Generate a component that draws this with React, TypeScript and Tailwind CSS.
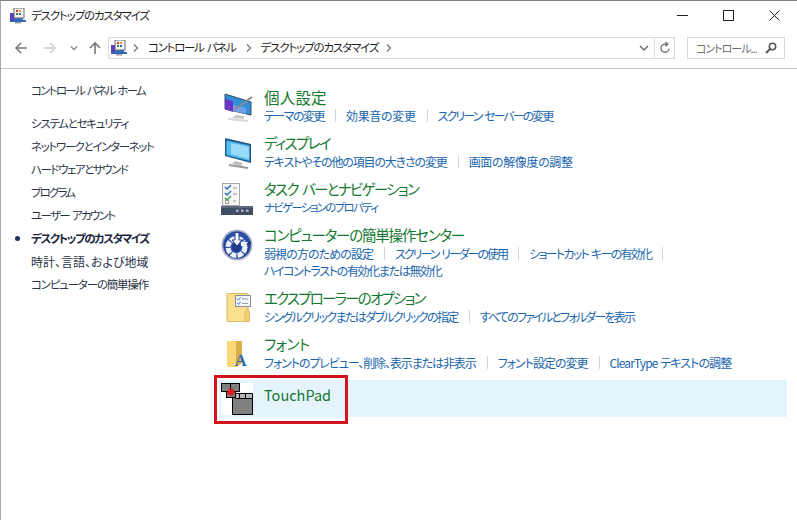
import React from "react";

const jp = "[font-family:'Noto_Sans_CJK_JP','Noto_Sans_JP',sans-serif]";

function PersonalizeMini({ size = 16 }: { size?: number }) {
  return (
    <svg width={size} height={size} viewBox="0 0 16 16">
      <rect x="0" y="5" width="13" height="8" fill="#2f6fd6" />
      <rect x="0" y="5" width="4" height="8" fill="#5a3fc0" />
      <rect x="0" y="12" width="16" height="2" fill="#3565b5" />
      <rect x="4" y="0" width="10" height="10" fill="#f4f4f4" stroke="#6a6a6a" strokeWidth="1" />
      <rect x="6" y="2" width="2" height="2" fill="#d33" />
      <rect x="9" y="2" width="2" height="2" fill="#e0a020" />
      <rect x="6" y="5" width="2" height="2" fill="#3a8a3a" />
      <rect x="9" y="5" width="2" height="2" fill="#3a6ad0" />
      <rect x="5" y="14" width="6" height="1.5" fill="#a0a0a0" />
    </svg>
  );
}

function IconPersonal() {
  return (
    <svg width="32" height="32" viewBox="0 0 32 32">
      <path d="M1 3 L27 11 V24 L1 18 Z" fill="#2f8fd8" stroke="#3a4a5a" strokeWidth="1" />
      <path d="M1 8 L9 10 V21 L1 18 Z" fill="#6a35c8" />
      <path d="M9 14 L22 17 V23 L9 20 Z" fill="#6fa0e8" />
      <path d="M10 19 L28 6" stroke="#8a8a8a" strokeWidth="2" />
      <path d="M12 24 L20 25 V28 L8 27 Z" fill="#c8c8c8" />
      <path d="M4 28 L24 30" stroke="#d8d8d8" strokeWidth="2" />
    </svg>
  );
}

function IconDisplay() {
  return (
    <svg width="32" height="32" viewBox="0 0 32 32">
      <path d="M1 1 L27 7 V26 L1 19 Z" fill="#1d5d8e" />
      <path d="M2.5 3.5 L25.5 8.5 V24 L2.5 18 Z" fill="#55bdf0" />
      <path d="M7 6 L25 10 V22 L7 17 Z" fill="#9adcf8" />
      <path d="M11 24 L18 26 V29 L8 27 Z" fill="#bcbcbc" />
      <path d="M5 28 L24 31" stroke="#9a9a9a" strokeWidth="2" />
    </svg>
  );
}

function IconTaskbar() {
  return (
    <svg width="32" height="32" viewBox="0 0 32 32">
      <rect x="1.5" y="0.5" width="17" height="22" fill="#f6f6f6" stroke="#a8a8a8" />
      <path d="M4 4 L6 6 L10 2" stroke="#2a6fc0" strokeWidth="1.5" fill="none" />
      <path d="M4 10 L6 12 L10 8" stroke="#2a6fc0" strokeWidth="1.5" fill="none" />
      <path d="M4 15 L6 17 L10 13" stroke="#4a9a4a" strokeWidth="1.5" fill="none" />
      <rect x="4.5" y="17.5" width="3" height="3" fill="#fff" stroke="#999" />
      <path d="M12 5 H16 M12 11 H16 M12 18 H15" stroke="#999" />
      <rect x="0" y="23" width="32" height="9" fill="#3f4e62" />
      <rect x="0" y="23" width="32" height="2" fill="#5c6a80" />
      <rect x="15" y="26.5" width="2.5" height="2.5" fill="#a8b0bc" />
      <rect x="20" y="26.5" width="2.5" height="2.5" fill="#a8b0bc" />
      <rect x="25" y="26.5" width="2.5" height="2.5" fill="#a8b0bc" />
    </svg>
  );
}

function IconAccess() {
  return (
    <svg width="32" height="32" viewBox="0 0 32 32">
      <defs>
        <radialGradient id="acc" cx="50%" cy="40%" r="60%">
          <stop offset="0%" stopColor="#3f6fd0" />
          <stop offset="100%" stopColor="#1f3a8a" />
        </radialGradient>
      </defs>
      <circle cx="16" cy="16" r="15.5" fill="#aab4c8" />
      <circle cx="16" cy="16" r="13.8" fill="url(#acc)" />
      <circle cx="15.5" cy="18" r="8.5" fill="none" stroke="#eef2fa" strokeWidth="5" strokeDasharray="5.5 1.2" />
      <path d="M22 14 L30 14" stroke="#1f3a8a" strokeWidth="3" />
      <path d="M20 13 L27 13 L25 16 L27 19 L20 17 Z" fill="#eef2fa" />
      <circle cx="15.5" cy="18" r="4.6" fill="#1f3a8a" />
      <path d="M14 3.5 H18 V11 H21 L16 17 L11 11 H14 Z" fill="#fff" stroke="#1f3a8a" strokeWidth="1" />
    </svg>
  );
}

function IconFolderOptions() {
  return (
    <svg width="32" height="32" viewBox="0 0 32 32">
      <path d="M6 1.5 H27 V29.5 H6 Z" fill="#fbe08f" stroke="#dcbc68" />
      <path d="M24 29.5 V20 L26.5 16 L28.5 20 V29.5 Z" fill="#f5cf72" stroke="#dcbc68" />
      <rect x="14.5" y="3.5" width="15" height="11" fill="#f4f6f8" stroke="#8a8f98" />
      <path d="M16 6.5 L17.5 8 L19.5 5.5 M16 11 L17.5 12.5 L19.5 10" stroke="#3a76c4" fill="none" />
      <path d="M21 7 H27 M21 11.5 H27" stroke="#9a9a9a" />
    </svg>
  );
}

function IconFonts() {
  return (
    <svg width="32" height="32" viewBox="0 0 32 32">
      <path d="M6 3 H21 V25 L15 29 H6 Z" fill="#f8d878" />
      <path d="M15 3 H21 V25 L15 29 Z" fill="#dcae4a" />
      <text x="13.5" y="28" fontFamily="'Liberation Serif', serif" fontWeight="700" fontSize="17" fill="#2a6cb4">A</text>
    </svg>
  );
}

function IconTouchPad() {
  return (
    <svg width="32" height="32" viewBox="0 0 32 32">
      <rect x="0" y="0" width="32" height="32" fill="#ffffff" />
      <rect x="0.5" y="0.5" width="9" height="8" fill="#808080" stroke="#000" />
      <rect x="9.5" y="0.5" width="9" height="8" fill="#808080" stroke="#000" />
      <rect x="5.5" y="8.5" width="9" height="6" fill="#808080" stroke="#000" />
      <path d="M14.5 10.5 H31.5 V31.5 H11.5 V14.5 H14.5 Z" fill="#808080" stroke="#000" />
      <path d="M14.5 15.5 H31.5" stroke="#000" />
      <path d="M15 11 H31 V15 H15 Z" fill="#b8b8b8" />
      <path d="M18.5 10.5 V15 M24.5 10.5 V15" stroke="#000" />
      <circle cx="10" cy="9" r="3.5" fill="#e01b24" />
    </svg>
  );
}

function Sep() {
  return <span className="ml-[11px] mr-[10px] inline-block h-[13px] w-px bg-[#d0d5da]" />;
}

type Item = { t: string; c: string };

function Links({ items, sepEnd }: { items: Item[]; sepEnd?: boolean }) {
  return (
    <div className="flex h-[17px] items-center text-[12px] text-[#1a66ad]">
      {items.map((it, i) => (
        <React.Fragment key={it.t}>
          {i > 0 && <Sep />}
          <span className={`whitespace-nowrap ${it.c}`}>{it.t}</span>
        </React.Fragment>
      ))}
      {sepEnd && <Sep />}
    </div>
  );
}

function Section({
  icon,
  title,
  titleClass,
  lines,
  className = "",
  iconClass = "ml-[2px] w-[43px]",
}: {
  icon: React.ReactNode;
  title: string;
  titleClass: string;
  lines: { items: Item[]; sepEnd?: boolean }[];
  className?: string;
  iconClass?: string;
}) {
  return (
    <div className={`flex ${className}`}>
      <div className={`mt-[3px] shrink-0 ${iconClass}`}>{icon}</div>
      <div className="flex flex-col">
        <div className={`flex h-[19px] items-center whitespace-pre text-[#13782f] ${titleClass}`}>{title}</div>
        {lines.map((l, i) => (
          <Links key={i} items={l.items} sepEnd={l.sepEnd} />
        ))}
      </div>
    </div>
  );
}

const sideItems: Item[] = [
  { t: "システムとセキュリティ", c: "text-[11.5px] tracking-[-1.3px]" },
  { t: "ネットワークとインターネット", c: "text-[11.5px] tracking-[-1.36px]" },
  { t: "ハードウェアとサウンド", c: "text-[11.5px] tracking-[-1.45px]" },
  { t: "プログラム", c: "text-[11.5px] tracking-[-1.9px]" },
  { t: "ユーザー アカウント", c: "text-[11.5px] tracking-[-1.67px] [word-spacing:2px]" },
];

function Chevron({ className = "" }: { className?: string }) {
  return (
    <svg className={className} width="6" height="8" viewBox="0 0 6 8">
      <path d="M1 0.5L4.5 4L1 7.5" fill="none" stroke="#777" strokeWidth="1.3" />
    </svg>
  );
}

export default function App() {
  return (
    <div
      className={`relative h-[520px] w-[797px] overflow-hidden border-t border-l border-t-[#7c8480] border-l-[#a8a8a8] bg-white ${jp} text-[#1e1e1e] [font-feature-settings:'palt'] leading-none`}
    >
      {/* Title bar */}
      <div className="flex h-[29px] items-center pl-[9px]">
        <PersonalizeMini />
        <span className="ml-[5px] whitespace-nowrap text-[11.5px] tracking-[-1.15px]">デスクトップのカスタマイズ</span>
        <div className="ml-auto flex h-full items-center text-[#222]">
          <div className="flex w-[46px] justify-center">
            <svg width="11" height="11" viewBox="0 0 11 11"><path d="M0 5.5H11" stroke="#222" /></svg>
          </div>
          <div className="flex w-[46px] justify-center">
            <svg width="11" height="11" viewBox="0 0 11 11"><rect x="0.5" y="0.5" width="10" height="10" fill="none" stroke="#222" /></svg>
          </div>
          <div className="flex w-[46px] justify-center">
            <svg width="11" height="11" viewBox="0 0 11 11"><path d="M0.5 0.5L10.5 10.5M10.5 0.5L0.5 10.5" stroke="#222" /></svg>
          </div>
        </div>
      </div>

      {/* Address bar */}
      <div className="flex h-[39px] items-start border-b border-[#c8c8c8] pt-[7px]">
        <div className="flex h-[22px] w-[107px] items-center">
          <svg className="ml-[13px]" width="14" height="14" viewBox="0 0 14 14"><path d="M13 7H2M7 2L2 7L7 12" fill="none" stroke="#7a7a7a" strokeWidth="1.6" /></svg>
          <svg className="ml-[15px]" width="14" height="14" viewBox="0 0 14 14"><path d="M1 7H12M7 2L12 7L7 12" fill="none" stroke="#d0d0d0" strokeWidth="1.6" /></svg>
          <svg className="ml-[13px]" width="8" height="8" viewBox="0 0 8 8"><path d="M1 2.5L4 5.5L7 2.5" fill="none" stroke="#8a8a8a" strokeWidth="1.4" /></svg>
          <svg className="ml-[10px]" width="14" height="14" viewBox="0 0 14 14"><path d="M7 13V2M2 7L7 2L12 7" fill="none" stroke="#7a7a7a" strokeWidth="1.6" /></svg>
        </div>
        <div className="flex h-[22px] w-[567px] items-center border border-[#d9d9d9] text-[11.5px]">
          <div className="ml-[2px]"><PersonalizeMini /></div>
          <Chevron className="ml-[6px]" />
          <span className="ml-[9px] whitespace-nowrap tracking-[-1.3px] [word-spacing:2px]">コントロール パネル</span>
          <Chevron className="ml-[10px]" />
          <span className="ml-[9px] whitespace-nowrap tracking-[-1.15px]">デスクトップのカスタマイズ</span>
          <Chevron className="ml-[8px]" />
          <div className="ml-auto flex h-full items-center">
            <svg className="mr-[5px]" width="10" height="10" viewBox="0 0 10 10"><path d="M1 3L5 7L9 3" fill="none" stroke="#666" strokeWidth="1.4" /></svg>
            <div className="flex h-full w-[20px] items-center justify-center border-l border-[#d9d9d9]">
              <svg width="12" height="12" viewBox="0 0 12 12"><path d="M10 6.5A4 4 0 1 1 6 2.2H8M6.5 0L8.8 2.2L6.5 4.4" fill="none" stroke="#777" strokeWidth="1.4" /></svg>
            </div>
          </div>
        </div>
        <div className="ml-[12px] flex h-[22px] w-[98px] items-center border border-[#d9d9d9] pl-[8px] text-[11px] text-[#6d6d6d]">
          <span className="whitespace-nowrap tracking-[-1px]">コントロール...</span>
          <svg className="ml-auto mr-[7px]" width="12" height="12" viewBox="0 0 12 12"><circle cx="7.5" cy="4.5" r="3.2" fill="none" stroke="#555" strokeWidth="1.5" /><path d="M5 7L1 11" stroke="#555" strokeWidth="2" /></svg>
        </div>
      </div>

      {/* Body */}
      <div className="flex">
        <aside className="w-[218px] shrink-0 pl-[30px] text-[12px] text-[#2b3448]">
          <div className="mt-[11px] flex h-[22px] items-center whitespace-nowrap text-[11.5px] tracking-[-1.72px] [word-spacing:2px]">コントロール パネル ホーム</div>
          <div className="mt-[10px] flex flex-col">
            {sideItems.map((s) => (
              <div key={s.t} className={`flex h-[23px] items-center whitespace-nowrap ${s.c}`}>{s.t}</div>
            ))}
            <div className="relative flex h-[23px] items-center whitespace-nowrap text-[11.5px] font-bold tracking-[-1.46px] text-[#1d2740]">
              <span className="absolute left-[-16px] top-[9px] h-[5px] w-[5px] rounded-full bg-[#1f2f5f]" />
              デスクトップのカスタマイズ
            </div>
            <div className="flex h-[23px] items-center whitespace-nowrap">時計、言語、および地域</div>
            <div className="flex h-[23px] items-center whitespace-nowrap text-[11.5px] tracking-[-1.2px]">コンピューターの簡単操作</div>
          </div>
        </aside>
        <main className="w-[568px] pt-[19px]">
          <Section
            iconClass="ml-[5px] w-[40px]"
            icon={<IconPersonal />}
            title="個人設定"
            titleClass="text-[15.5px] tracking-[0.2px]"
            lines={[{ items: [
              { t: "テーマの変更", c: "tracking-[-1.5px]" },
              { t: "効果音の変更", c: "tracking-[-0.33px]" },
              { t: "スクリーン セーバーの変更", c: "tracking-[-1.92px] [word-spacing:2px]" },
            ] }]}
          />
          <Section
            className="mt-[10px]"
            iconClass="ml-[5px] w-[40px]"
            icon={<IconDisplay />}
            title="ディスプレイ"
            titleClass="text-[14.5px] tracking-[-1.6px]"
            lines={[{ items: [
              { t: "テキストやその他の項目の大きさの変更", c: "tracking-[-1.15px]" },
              { t: "画面の解像度の調整", c: "tracking-[-0.35px]" },
            ] }]}
          />
          <Section
            className="mt-[10px]"
            icon={<IconTaskbar />}
            title="タスク バーとナビゲーション"
            titleClass="text-[14.5px] tracking-[-1.7px] [word-spacing:3px]"
            lines={[{ items: [{ t: "ナビゲーションのプロパティ", c: "text-[11.5px] tracking-[-1.7px]" }] }]}
          />
          <Section
            className="mt-[10px]"
            icon={<IconAccess />}
            title="コンピューターの簡単操作センター"
            titleClass="text-[14.5px] tracking-[-1.2px]"
            lines={[
              { items: [
                { t: "弱視の方のための設定", c: "tracking-[-0.9px]" },
                { t: "スクリーン リーダーの使用", c: "tracking-[-2px] [word-spacing:2px]" },
                { t: "ショートカット キーの有効化", c: "tracking-[-1.71px] [word-spacing:2px]" },
              ], sepEnd: true },
              { items: [{ t: "ハイコントラストの有効化または無効化", c: "tracking-[-1.33px]" }] },
            ]}
          />
          <Section
            className="mt-[10px]"
            icon={<IconFolderOptions />}
            title="エクスプローラーのオプション"
            titleClass="text-[14.5px] tracking-[-1.8px]"
            lines={[{ items: [
              { t: "シングルクリックまたはダブルクリックの指定", c: "tracking-[-1.65px]" },
              { t: "すべてのファイルとフォルダーを表示", c: "tracking-[-1.8px]" },
            ] }]}
          />
          <Section
            className="mt-[10px]"
            icon={<IconFonts />}
            title="フォント"
            titleClass="text-[14.5px] tracking-[-0.45px]"
            lines={[{ items: [
              { t: "フォントのプレビュー、削除、表示または非表示", c: "tracking-[-1.1px]" },
              { t: "フォント設定の変更", c: "tracking-[-1px]" },
              { t: "ClearType テキストの調整", c: "tracking-[-0.9px] [word-spacing:1px]" },
            ] }]}
          />
          <div className="mt-[9px] flex h-[37px] items-center bg-[#e5f3fd]">
            <div className="ml-[2px] w-[43px] shrink-0"><IconTouchPad /></div>
            <span className="-mt-[7px] text-[14.5px] text-[#13782f]">TouchPad</span>
          </div>
        </main>
      </div>

      {/* Annotation */}
      <div className="absolute left-[213px] top-[374px] h-[49px] w-[134px] border-[3px] border-[#d3141c]" />
    </div>
  );
}
